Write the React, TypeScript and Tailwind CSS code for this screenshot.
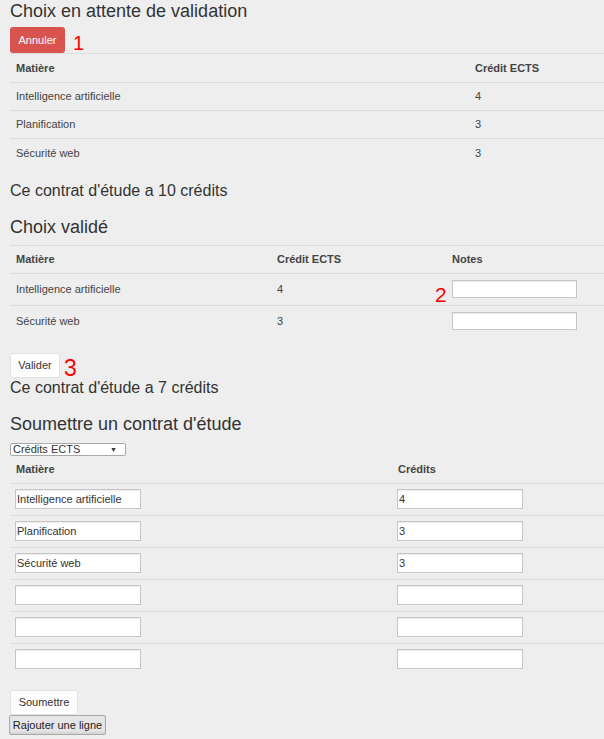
const font = { fontFamily: '"Liberation Sans", Arial, sans-serif' };

const Num = ({ n, className }: { n: string; className: string }) => (
  <span className={`text-[#ff0000] leading-none ${className}`}>{n}</span>
);

const TextInput = ({ value = "", className = "" }: { value?: string; className?: string }) => (
  <input
    readOnly
    value={value}
    className={`block bg-white border border-[#c6c6c6] shadow-[inset_0_1px_1px_rgba(0,0,0,0.08)] text-[11px] text-[#333] px-[1px] outline-none ${className}`}
  />
);

export default function App() {
  const pending = [
    { name: "Intelligence artificielle", ects: 4 },
    { name: "Planification", ects: 3 },
    { name: "Sécurité web", ects: 3 },
  ];
  const validated = [
    { name: "Intelligence artificielle", ects: 4 },
    { name: "Sécurité web", ects: 3 },
  ];
  const submit = [
    { name: "Intelligence artificielle", ects: "4" },
    { name: "Planification", ects: "3" },
    { name: "Sécurité web", ects: "3" },
    { name: "", ects: "" },
    { name: "", ects: "" },
    { name: "", ects: "" },
  ];

  return (
    <div className="min-h-[739px] w-[604px] bg-[#eeeeee] pl-[10px] text-[#333]" style={font}>
      {/* Choix en attente */}
      <h2 className="text-[18px] leading-[22px] h-[27px]">Choix en attente de validation</h2>
      <div className="flex items-center h-[26px]">
        <button className="h-[26px] w-[55px] rounded-[3px] bg-[#d9534f] text-white text-[11px]">Annuler</button>
        <Num n="1" className="ml-[8px] mt-[5px] text-[20px]" />
      </div>
      <table className="w-[594px] table-fixed text-[11px] text-[#444]">
        <colgroup>
          <col className="w-[459px]" />
          <col />
        </colgroup>
        <thead>
          <tr className="h-[29px] border-t border-[#dcdcdc]">
            <th className="text-left font-bold px-[6px]">Matière</th>
            <th className="text-left font-bold px-[6px]">Crédit ECTS</th>
          </tr>
        </thead>
        <tbody>
          {pending.map((r) => (
            <tr key={r.name} className="h-[28px] border-t border-[#dcdcdc]">
              <td className="px-[6px]">{r.name}</td>
              <td className="px-[6px]">{r.ects}</td>
            </tr>
          ))}
        </tbody>
      </table>
      <p className="mt-[14px] text-[16px] leading-[20px]">Ce contrat d'étude a 10 crédits</p>

      {/* Choix validé */}
      <h2 className="mt-[15px] text-[18px] leading-[22px] h-[29px]">Choix validé</h2>
      <table className="w-[594px] table-fixed text-[11px] text-[#444]">
        <colgroup>
          <col className="w-[261px]" />
          <col className="w-[175px]" />
          <col />
        </colgroup>
        <thead>
          <tr className="h-[28px] border-t border-[#dcdcdc]">
            <th className="text-left font-bold px-[6px]">Matière</th>
            <th className="text-left font-bold px-[6px]">Crédit ECTS</th>
            <th className="text-left font-bold px-[6px]">Notes</th>
          </tr>
        </thead>
        <tbody>
          {validated.map((r, i) => (
            <tr key={r.name} className="h-[32px] border-t border-[#dcdcdc]">
              <td className="px-[6px]">{r.name}</td>
              <td className="px-[6px]">{r.ects}</td>
              <td className="px-[6px] relative">
                {i === 0 && <Num n="2" className="absolute left-[-11px] top-[10px] text-[21px]" />}
                <TextInput className="w-[125px] h-[18px]" />
              </td>
            </tr>
          ))}
        </tbody>
      </table>
      <div className="mt-[16px] flex items-center h-[25px]">
        <button className="h-[25px] w-[50px] rounded-[3px] bg-white border border-[#e2e2e2] text-[11px] text-[#333]">Valider</button>
        <Num n="3" className="ml-[4px] mt-[6px] text-[23px]" />
      </div>
      <p className="text-[16px] leading-[20px]">Ce contrat d'étude a 7 crédits</p>

      {/* Soumettre */}
      <h2 className="mt-[15px] text-[18px] leading-[22px] h-[30px]">Soumettre un contrat d'étude</h2>
      <div className="w-[116px] h-[13px] bg-white border border-[#a9a9a9] rounded-[2px] flex items-center justify-between px-[2px] text-[11px] leading-none text-[#333]">
        <span>Crédits ECTS</span>
        <span className="text-[7px] pr-[6px]">▼</span>
      </div>
      <table className="w-[594px] table-fixed text-[11px] text-[#444]">
        <colgroup>
          <col className="w-[382px]" />
          <col />
        </colgroup>
        <thead>
          <tr className="h-[27px]">
            <th className="text-left font-bold px-[6px]">Matière</th>
            <th className="text-left font-bold px-[6px]">Crédits</th>
          </tr>
        </thead>
        <tbody>
          {submit.map((r, i) => (
            <tr key={i} className="h-[32px] border-t border-[#dcdcdc]">
              <td className="px-[5px]">
                <TextInput value={r.name} className="w-[126px] h-[20px]" />
              </td>
              <td className="px-[5px]">
                <TextInput value={r.ects} className="w-[126px] h-[20px]" />
              </td>
            </tr>
          ))}
        </tbody>
      </table>
      <div className="mt-[15px]">
        <button className="block h-[25px] w-[68px] rounded-[3px] bg-white border border-[#e2e2e2] text-[11px] text-[#333]">Soumettre</button>
        <button className="block -ml-[1px] h-[20px] w-[97px] rounded-[2px] bg-[#e6e6e6] border border-[#a9a9a9] text-[11px] text-[#222] shadow-[inset_0_-2px_2px_rgba(0,0,0,0.08)]">Rajouter une ligne</button>
      </div>
    </div>
  );
}
